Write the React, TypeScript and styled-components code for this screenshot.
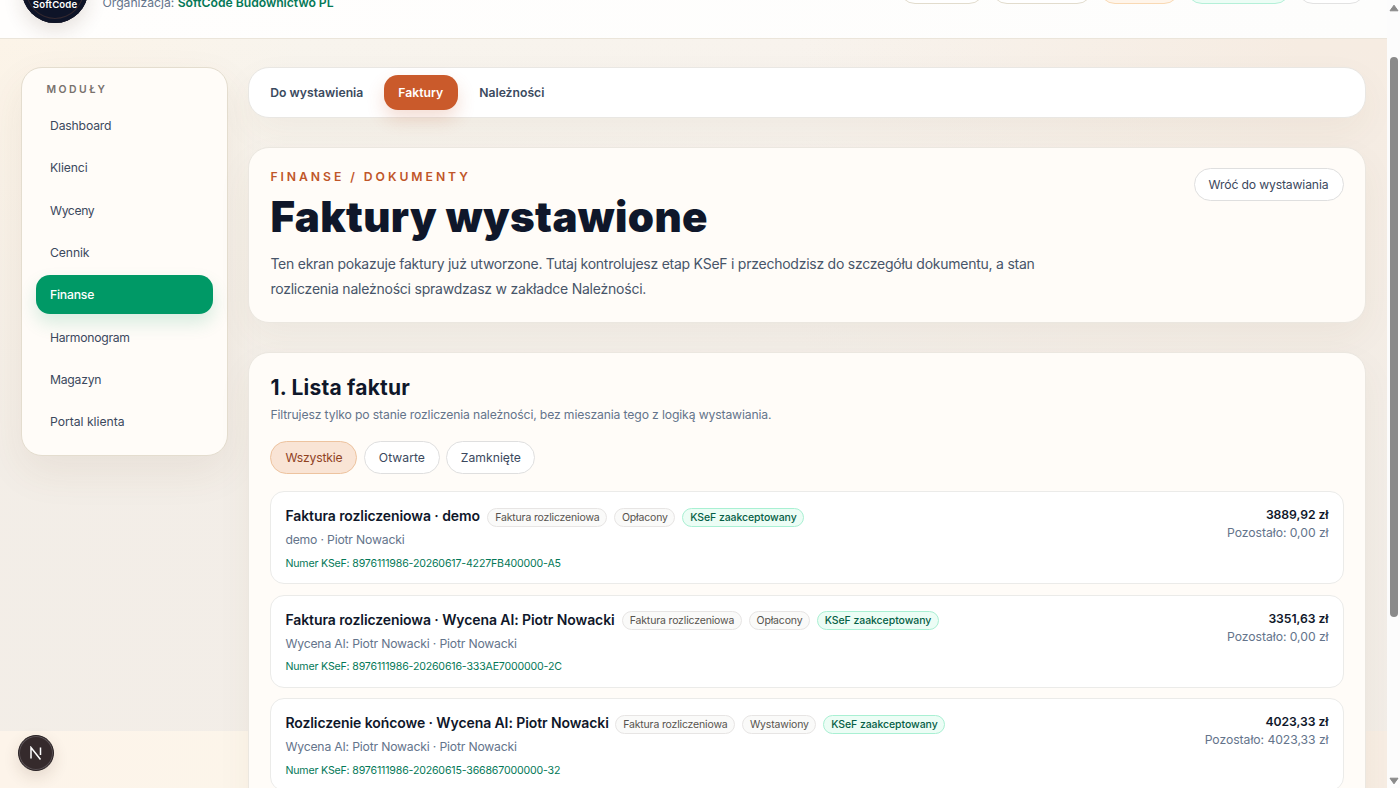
import React from "react";
import styled, { createGlobalStyle, css } from "styled-components";

const Global = createGlobalStyle`
  * { box-sizing: border-box; }
  html, body { margin: 0; padding: 0; }
  body { font-family: Inter, "Liberation Sans", sans-serif; color: #0f172a; overflow: hidden; font-size: 12.2px; }
  h1, h2, h3, p { margin: 0; }
`;

const Window = styled.div`
  display: flex;
  width: 1400px;
  height: 788px;
  overflow: hidden;
`;

const Page = styled.div`
  flex: 1;
  min-width: 0;
  display: flex;
  flex-direction: column;
  background: linear-gradient(90deg, #fdf4ea 0, #fcf5ea 250px, #f7ede3 1387px);
`;

const Header = styled.header`
  flex: none;
  height: 39px;
  display: flex;
  align-items: flex-end;
  padding: 0 21px 15px 22px;
  background: linear-gradient(90deg, #fffefd, #fdfdfc);
  border-bottom: 1px solid #ebe5da;
  overflow: hidden;
`;

const Logo = styled.div`
  flex: none;
  width: 66px;
  height: 66px;
  border-radius: 50%;
  background: #0e1428;
  box-shadow: inset 0 0 0 4px #0e1428, inset 0 0 0 5px #33282f, 0 8px 20px rgba(80, 50, 30, 0.14);
  color: #fff;
  font-size: 9.6px;
  font-weight: 600;
  line-height: 12px;
  letter-spacing: 0.12px;
  text-align: center;
  padding-top: 42px;
`;

const Organization = styled.p`
  margin-left: 14.5px;
  line-height: 16px;
  margin-bottom: 12px;
  color: #64748b;
  letter-spacing: -0.02px;
  white-space: nowrap;
  strong { color: #047857; font-weight: 600; }
`;

const HeaderPills = styled.div`
  margin-left: auto;
  display: flex;
  gap: 6px;
  padding-bottom: 19px;
`;

const HeaderPill = styled.span<{ $w: number; $bg?: string; $line?: string }>`
  width: ${(p) => p.$w}px;
  height: 33px;
  border-radius: 16px;
  background: ${(p) => p.$bg ?? "#fff"};
  border: 1px solid ${(p) => p.$line ?? "#e2dccd"};
`;

const Body = styled.div`
  flex: 1;
  min-height: 0;
  display: flex;
  align-items: flex-start;
  gap: 20.4px;
  padding: 28.4px 21.5px 0 21px;
  background:
    linear-gradient(180deg, rgba(242, 237, 231, 0) 0, rgba(242, 237, 231, 0.9) 420px) 0 0 / 100% 692px no-repeat,
    linear-gradient(90deg, #fcf4e8 0, #f8f4ed 300px, #f8f3ed 800px, #f6ece2 1300px) 0 0 / 100% 692px no-repeat;
`;

const Sidebar = styled.nav`
  flex: none;
  width: 207px;
  height: 388.3px;
  padding: 14.6px 14px;
  border: 1px solid #e4ddcf;
  border-radius: 21px;
  background: #fffcf8;
  box-shadow: 0 16px 40px rgba(120, 80, 40, 0.08);
`;

const SidebarLabel = styled.div`
  padding-left: 10.5px;
  height: 14px;
  margin-bottom: 9px;
  line-height: 14px;
  font-size: 10.4px;
  font-weight: 600;
  letter-spacing: 2.5px;
  color: #78716c;
`;

const NavItem = styled.a<{ $active?: boolean; $ls?: number }>`
  display: flex;
  align-items: center;
  height: 39.3px;
  margin-bottom: 3px;
  padding-left: 14px;
  border-radius: 14px;
  color: #3b485d;
  letter-spacing: ${(p) => p.$ls ?? 0}px;
  ${(p) =>
    p.$active &&
    css`
      background: #009966;
      color: #fff;
      font-weight: 500;
      box-shadow: 0 9px 18px rgba(0, 153, 102, 0.16);
    `}
`;

const Content = styled.main`
  flex: 1;
  min-width: 0;
  display: flex;
  flex-direction: column;
  gap: 29px;
`;

const Tabs = styled.div`
  display: flex;
  align-items: center;
  gap: 7px;
  height: 50.4px;
  padding: 0 7.4px;
  border: 1px solid #e9e7e3;
  border-radius: 21px;
  background: #fff;
  box-shadow: 0 14px 36px rgba(90, 80, 40, 0.05);
`;

const Tab = styled.a<{ $active?: boolean; $w: number }>`
  display: flex;
  align-items: center;
  justify-content: center;
  width: ${(p) => p.$w}px;
  height: 35px;
  border-radius: 14px;
  font-weight: 600;
  color: #3b4a5e;
  ${(p) =>
    p.$active &&
    css`
      background: #ca5a2b;
      color: #fff;
      box-shadow: 0 9px 18px rgba(202, 90, 43, 0.2);
    `}
`;

const Panel = styled.section`
  flex: none;
  padding: 20px 21px;
  border: 1px solid #ebe7e0;
  border-radius: 21px;
  background: #fffcf8;
  box-shadow: 0 14px 36px rgba(90, 80, 40, 0.05);
`;

const Hero = styled(Panel)`
  height: 176.2px;
  display: flex;
  justify-content: space-between;
  align-items: flex-start;
`;

const HeroAction = styled.div`
  padding-top: 0.4px;
`;

const Eyebrow = styled.div`
  padding-top: 0.6px;
  font-size: 12.2px;
  line-height: 18px;
  font-weight: 600;
  letter-spacing: 2.95px;
  color: #bf5629;
`;

const Title = styled.h1`
  margin-top: 6px;
  font-size: 42px;
  line-height: 50px;
  font-weight: 900;
  letter-spacing: 0.35px;
`;

const Lead = styled.p`
  margin-top: 10px;
  font-size: 14px;
  line-height: 24.7px;
  color: #475569;
`;

const Line = styled.span<{ $ls: number }>`
  display: block;
  white-space: nowrap;
  letter-spacing: ${(p) => p.$ls}px;
`;

const Pill = styled.button<{ $w: number; $active?: boolean; $ls?: number }>`
  width: ${(p) => p.$w}px;
  height: 33px;
  padding: 0;
  border-radius: 16.5px;
  border: 1px solid ${(p) => (p.$active ? "#edc39f" : "#dfdfdf")};
  background: ${(p) => (p.$active ? "#f9e4d5" : "#fff")};
  color: ${(p) => (p.$active ? "#90421f" : "#3b485d")};
  font: inherit;
  letter-spacing: ${(p) => p.$ls ?? 0}px;
  white-space: nowrap;
`;

const ListPanel = styled(Panel)`
  height: 600px;
`;

const ListTitle = styled.h2`
  margin-top: 2.4px;
  font-size: 21px;
  line-height: 26px;
  font-weight: 700;
  letter-spacing: 0.22px;
`;

const ListHint = styled.p`
  margin-top: 4.2px;
  line-height: 18px;
  color: #64748b;
  letter-spacing: -0.14px;
`;

const Filters = styled.div`
  display: flex;
  gap: 6.5px;
  margin: 17px 0 17.5px;
`;

const Invoices = styled.div`
  display: flex;
  flex-direction: column;
  gap: 10.4px;
`;

const Card = styled.article`
  display: flex;
  justify-content: space-between;
  height: 93.2px;
  padding: 14px;
  border: 1px solid #ebebe9;
  border-radius: 14px;
  background: #fff;
`;

const CardHead = styled.div`
  display: flex;
  align-items: center;
  height: 20px;
`;

const CardTitle = styled.h3<{ $w: number }>`
  width: ${(p) => p.$w}px;
  font-size: 14px;
  line-height: 20px;
  font-weight: 600;
  letter-spacing: -0.09px;
  white-space: nowrap;
`;

const Tag = styled.span<{ $w: number; $green?: boolean }>`
  width: ${(p) => p.$w}px;
  height: 19px;
  margin: 2px 0 0 7px;
  border: 1px solid ${(p) => (p.$green ? "#a9f0d3" : "#e7e5e4")};
  border-radius: 10px;
  background: ${(p) => (p.$green ? "#ecfdf5" : "#fafaf9")};
  color: ${(p) => (p.$green ? "#065f46" : "#57534e")};
  font-size: 10.5px;
  font-weight: ${(p) => (p.$green ? 500 : 400)};
  line-height: 18px;
  letter-spacing: ${(p) => (p.$green ? -0.07 : -0.16)}px;
  text-align: center;
  white-space: nowrap;
`;

const Client = styled.p`
  margin-top: 5px;
  line-height: 18px;
  color: #64748b;
  letter-spacing: -0.18px;
`;

const Ksef = styled.p`
  margin-top: 6.6px;
  font-size: 10.6px;
  line-height: 15px;
  color: #047857;
  letter-spacing: -0.17px;
`;

const Amounts = styled.div`
  text-align: right;
  line-height: 18px;
  color: #64748b;
  letter-spacing: -0.05px;
  strong { display: block; color: #0f172a; font-weight: 600; }
`;

const Scrollbar = styled.div`
  flex: none;
  width: 13px;
  display: flex;
  flex-direction: column;
  align-items: center;
  background: #fcfcfc;
  padding: 4px 0 3px 1px;
`;

const Thumb = styled.div`
  width: 8px;
  height: 560px;
  margin: 45px 0 auto;
  border-radius: 4px;
  background: #8a8a8a;
`;

const DevBadge = styled.div`
  position: absolute;
  left: 18px;
  top: 735px;
  width: 36px;
  height: 36px;
  border-radius: 50%;
  background: #352a2c;
  border: 1px solid #2a2326;
  box-shadow: inset 0 0 0 1px #5b5357, 0 6px 16px rgba(80, 50, 30, 0.14);
  display: flex;
  align-items: center;
  justify-content: center;
`;

const modules = [
  { label: "Dashboard", ls: -0.17 },
  { label: "Klienci", ls: -0.12 },
  { label: "Wyceny", ls: -0.38 },
  { label: "Cennik", ls: -0.1 },
  { label: "Finanse", ls: -0.2, active: true },
  { label: "Harmonogram", ls: -0.28 },
  { label: "Magazyn", ls: -0.25 },
  { label: "Portal klienta", ls: -0.02 },
];

const invoices = [
  { title: "Faktura rozliczeniowa · demo", w: 195, status: "Opłacony", sw: 61, client: "demo · Piotr Nowacki", ksef: "8976111986-20260617-4227FB400000-A5", total: "3889,92 zł", left: "0,00 zł" },
  { title: "Faktura rozliczeniowa · Wycena AI: Piotr Nowacki", w: 329.6, status: "Opłacony", sw: 61, client: "Wycena AI: Piotr Nowacki · Piotr Nowacki", ksef: "8976111986-20260616-333AE7000000-2C", total: "3351,63 zł", left: "0,00 zł" },
  { title: "Rozliczenie końcowe · Wycena AI: Piotr Nowacki", w: 323, status: "Wystawiony", sw: 74, client: "Wycena AI: Piotr Nowacki · Piotr Nowacki", ksef: "8976111986-20260615-366867000000-32", total: "4023,33 zł", left: "4023,33 zł" },
];

export default function App() {
  return (
    <>
      <Global />
      <Window>
        <Page>
          <Header>
            <Logo>SoftCode</Logo>
            <Organization>
              Organizacja: <strong>SoftCode Budownictwo PL</strong>
            </Organization>
            <HeaderPills>
              <HeaderPill $w={86} />
              <HeaderPill $w={102} />
              <HeaderPill $w={81} $bg="#fff5ea" $line="#f9d9b4" />
              <HeaderPill $w={105} $bg="#ecfdf5" $line="#b4f0d8" />
              <HeaderPill $w={69} $line="#e2e2e2" />
            </HeaderPills>
          </Header>
          <Body>
            <Sidebar>
              <SidebarLabel>MODUŁY</SidebarLabel>
              {modules.map((m) => (
                <NavItem key={m.label} $active={m.active} $ls={m.ls}>{m.label}</NavItem>
              ))}
            </Sidebar>
            <Content>
              <Tabs>
                <Tab $w={120}>Do wystawienia</Tab>
                <Tab $w={74} $active>Faktury</Tab>
                <Tab $w={94}>Należności</Tab>
              </Tabs>
              <Hero>
                <div>
                  <Eyebrow>FINANSE / DOKUMENTY</Eyebrow>
                  <Title>Faktury wystawione</Title>
                  <Lead>
                    <Line $ls={-0.245}>Ten ekran pokazuje faktury już utworzone. Tutaj kontrolujesz etap KSeF i przechodzisz do szczegółu dokumentu, a stan</Line>
                    <Line $ls={-0.225}>rozliczenia należności sprawdzasz w zakładce Należności.</Line>
                  </Lead>
                </div>
                <HeroAction>
                  <Pill $w={150} $ls={-0.16}>Wróć do wystawiania</Pill>
                </HeroAction>
              </Hero>
              <ListPanel>
                <ListTitle>1. Lista faktur</ListTitle>
                <ListHint>Filtrujesz tylko po stanie rozliczenia należności, bez mieszania tego z logiką wystawiania.</ListHint>
                <Filters>
                  <Pill $w={87} $ls={-0.2} $active>Wszystkie</Pill>
                  <Pill $w={76}>Otwarte</Pill>
                  <Pill $w={89}>Zamknięte</Pill>
                </Filters>
                <Invoices>
                  {invoices.map((i) => (
                    <Card key={i.ksef}>
                      <div>
                        <CardHead>
                          <CardTitle $w={i.w}>{i.title}</CardTitle>
                          <Tag $w={120}>Faktura rozliczeniowa</Tag>
                          <Tag $w={i.sw}>{i.status}</Tag>
                          <Tag $w={122} $green>KSeF zaakceptowany</Tag>
                        </CardHead>
                        <Client>{i.client}</Client>
                        <Ksef>Numer KSeF: {i.ksef}</Ksef>
                      </div>
                      <Amounts>
                        <strong>{i.total}</strong>
                        Pozostało: {i.left}
                      </Amounts>
                    </Card>
                  ))}
                </Invoices>
              </ListPanel>
            </Content>
          </Body>
        </Page>
        <Scrollbar>
          <svg width="10" height="8" viewBox="0 0 10 8"><path d="M5 1.2 9 6.8H1z" fill="#8a8a8a" stroke="#8a8a8a" strokeLinejoin="round" /></svg>
          <Thumb />
          <svg width="10" height="8" viewBox="0 0 10 8"><path d="M5 6.8 9 1.2H1z" fill="#8a8a8a" stroke="#8a8a8a" strokeLinejoin="round" /></svg>
        </Scrollbar>
      </Window>
      <DevBadge>
        <svg width="14" height="14" viewBox="0 0 14 14" fill="none" stroke="#fff" strokeWidth="1.5">
          <path d="M2 12.5V1.5L11.5 13.5M11.5 1.5V9" />
        </svg>
      </DevBadge>
    </>
  );
}
